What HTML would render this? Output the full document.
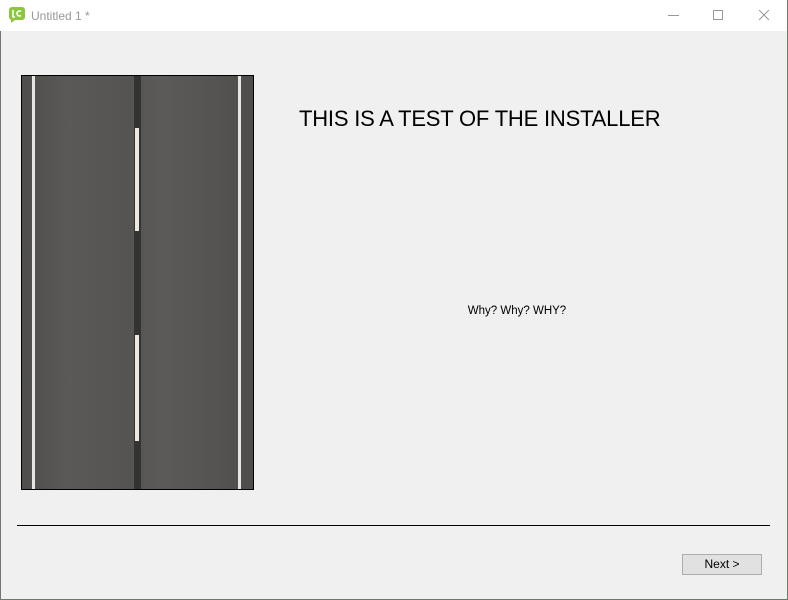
<!DOCTYPE html>
<html><head><meta charset="utf-8"><style>
*{margin:0;padding:0;box-sizing:border-box}
body{width:788px;height:600px;overflow:hidden;background:#3a4a3a;font-family:"Liberation Sans",sans-serif;position:relative}
.win{position:absolute;left:0;top:0;width:788px;height:600px;background:#f0f0f0;border:1px solid #6b7a6b;border-top:none}
.title{position:absolute;left:-1px;top:0;width:787px;height:31px;background:#fff}
.abs{position:absolute}
.road{position:absolute;left:20px;top:75px;width:233px;height:415px;border:1px solid #000;background:
linear-gradient(90deg,#4f4e4c 0,#5a5957 20%,#555452 45%,#5b5a58 60%,#565553 80%,#4e4d4b 100%)}
</style></head><body>
<div class="win">
<div class="title">
<svg class="abs" style="left:9px;top:7px" width="16" height="16" viewBox="0 0 16 16"><path d="M3 0h10a3 3 0 0 1 3 3v7a3 3 0 0 1-3 3H6l-4 3v-3.3A3 3 0 0 1 0 10V3a3 3 0 0 1 3-3z" fill="#8cc63f"/><path d="M4 3v7h2M12 4.5a2.5 2.5 0 1 0 0 4" stroke="#fff" stroke-width="1.6" fill="none"/></svg>
<div class="abs" style="left:31px;top:9px;font-size:12px;color:#999">Untitled 1 *</div>
<div class="abs" style="left:668px;top:15px;width:11px;height:1px;background:#999"></div>
<div class="abs" style="left:713px;top:10px;width:10px;height:10px;border:1px solid #999"></div>
<svg class="abs" style="left:758px;top:9px" width="12" height="12"><path d="M1 1L11 11M11 1L1 11" stroke="#999" stroke-width="1"/></svg>
</div>
<div class="road">
<div class="abs" style="left:10px;top:0;width:3px;height:413px;background:#e8e6e0"></div>
<div class="abs" style="left:112px;top:0;width:7px;height:413px;background:#333"></div>
<div class="abs" style="left:113px;top:52px;width:4px;height:103px;background:#efe9dc"></div>
<div class="abs" style="left:113px;top:259px;width:4px;height:106px;background:#efe9dc"></div>
<div class="abs" style="left:216px;top:0;width:3px;height:413px;background:#e8e6e0"></div>
</div>
<div class="abs" style="left:298px;top:106px;font-size:22px;letter-spacing:-0.2px;color:#000;white-space:nowrap">THIS IS A TEST OF THE INSTALLER</div>
<div class="abs" style="left:416px;top:305px;width:200px;text-align:center;font-size:11.5px;color:#000">Why? Why? WHY?</div>
<div class="abs" style="left:16px;top:525px;width:753px;height:1px;background:#000"></div>
<div class="abs" style="left:681px;top:554px;width:80px;height:21px;border:1px solid #adadad;background:#e1e1e1;font-size:12px;text-align:center;line-height:19px;color:#000">Next &gt;</div>
</div>
</body></html>
